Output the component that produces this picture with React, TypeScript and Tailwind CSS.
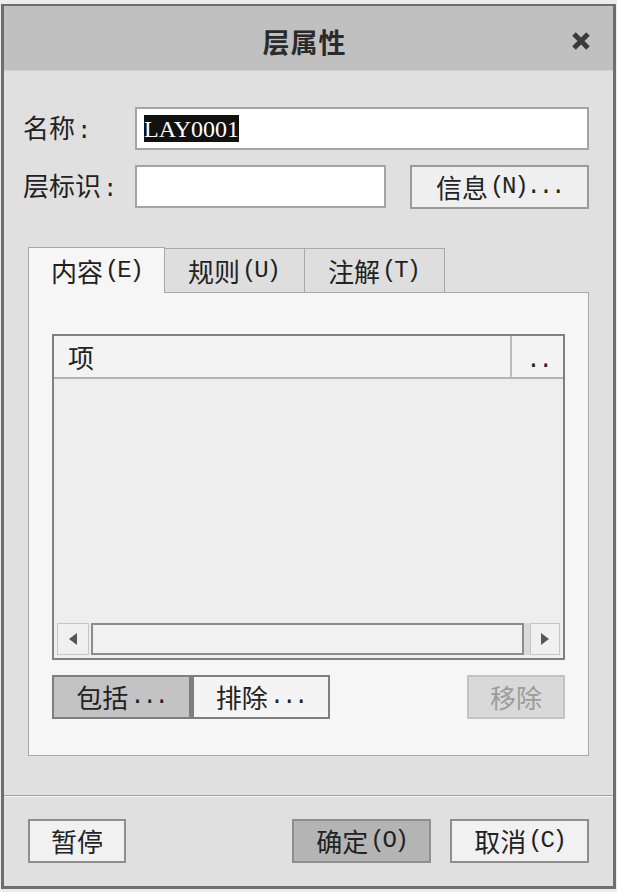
import type { ReactNode } from "react"

function Lt({ children }: { children: ReactNode }) {
  return <span className="ml-[2px] font-['Liberation_Mono',monospace] text-[24px] tracking-[-2.2px]">{children}</span>
}

function Btn({ children, className }: { children: ReactNode; className: string }) {
  return (
    <div className={`flex h-[44px] items-center justify-center border-2 leading-none ${className}`}>
      {children}
    </div>
  )
}

function Arrow({ dir }: { dir: "left" | "right" }) {
  return (
    <svg width="8" height="12" viewBox="0 0 8 12">
      {dir === "left" ? <path d="M8 0 L0 6 L8 12 Z" fill="#575757" /> : <path d="M0 0 L8 6 L0 12 Z" fill="#575757" />}
    </svg>
  )
}

export default function App() {
  return (
    <div className="h-[892px] w-[617px] bg-[#ececec] px-px pb-[3px] pt-[4px] font-['Noto_Sans_CJK_SC',sans-serif] text-[26px] text-[#222]">
      <div className="flex h-full flex-col border-x-[3px] border-b-[3px] border-t-2 border-[#6e6e6e] bg-[#e0e0e0]">
        {/* title bar */}
        <div className="relative flex h-[65px] items-center justify-center border-b border-[#d2d2d2] bg-[#c0c0c0] pr-[8px] pt-[6px]">
          <span className="text-[27px] font-bold leading-none tracking-[1px] text-[#2a2a2a]">层属性</span>
          <svg className="absolute right-[22px] top-[25px]" width="20" height="20" viewBox="0 0 20 20">
            <path d="M3 3 L17 17 M17 3 L3 17" stroke="#3a3a3a" strokeWidth="5" />
          </svg>
        </div>

        <div className="flex flex-1 flex-col px-[24px] pt-[36px]">
          {/* name */}
          <div className="flex h-[43px] items-center">
            <div className="-ml-[5px] w-[112px] leading-none">
              名称<Lt>:</Lt>
            </div>
            <div className="flex h-full flex-1 items-center border-2 border-[#a4a4a4] bg-white pl-[7px]">
              <span className="flex h-[27px] items-center bg-[#111] font-['Liberation_Serif',serif] text-[24px] leading-none text-white">
                LAY0001
              </span>
            </div>
          </div>

          {/* layer id */}
          <div className="mt-[15px] flex h-[43px] items-center">
            <div className="-ml-[5px] w-[112px] leading-none">
              层标识<Lt>:</Lt>
            </div>
            <div className="h-full w-[251px] border-2 border-[#a4a4a4] bg-white" />
            <Btn className="ml-[24px] flex-1 border-[#9a9a9a] bg-[#efefef]">
              信息<Lt>(N)...</Lt>
            </Btn>
          </div>

          {/* tabs */}
          <div className="mt-[39px] flex h-[45px] items-end">
            <div className="relative z-10 -mb-px flex h-[46px] w-[137px] items-center border border-b-0 border-[#a9a9a9] bg-[#f6f6f6] pl-[22px] leading-none">
              内容<Lt>(E)</Lt>
            </div>
            <div className="flex h-[44px] w-[140px] items-center border-r border-t border-[#a9a9a9] bg-[#dedede] pl-[23px] leading-none">
              规则<Lt>(U)</Lt>
            </div>
            <div className="flex h-[44px] w-[140px] items-center border-r border-t border-[#a9a9a9] bg-[#dedede] pl-[23px] leading-none">
              注解<Lt>(T)</Lt>
            </div>
          </div>

          {/* tab panel */}
          <div className="flex h-[464px] flex-col border border-[#a9a9a9] bg-[#f6f6f6] px-[23px] pt-[41px]">
            <div className="flex h-[326px] flex-col border-2 border-[#808080] bg-[#eeeeee]">
              <div className="flex h-[43px] border-b-2 border-[#b4b4b4] bg-[#f3f3f3]">
                <div className="flex flex-1 items-center border-r-2 border-[#bcbcbc] pl-[14px] leading-none">项</div>
                <div className="flex w-[51px] items-end justify-center pb-[4px] leading-none">
                  <Lt>..</Lt>
                </div>
              </div>
              <div className="flex-1" />
              <div className="mb-[3px] flex h-[32px] px-[3px]">
                <div className="flex w-[32px] items-center justify-center border border-[#c6c6c6] bg-[#f0f0f0]">
                  <Arrow dir="left" />
                </div>
                <div className="ml-[2px] flex-1 border-2 border-[#8c8c8c] bg-[#f1f1f1]" />
                <div className="w-[6px] bg-[#dadada]" />
                <div className="flex w-[30px] items-center justify-center border border-[#c6c6c6] bg-[#f0f0f0]">
                  <Arrow dir="right" />
                </div>
              </div>
            </div>

            <div className="mt-[15px] flex">
              <Btn className="h-[43px] w-[139px] border-[#7e7e7e] bg-[#c3c3c3]">
                包括<Lt>...</Lt>
              </Btn>
              <Btn className="h-[43px] w-[139px] border-l-[3px] border-[#7e7e7e] bg-[#f4f4f4]">
                排除<Lt>...</Lt>
              </Btn>
              <Btn className="ml-auto h-[43px] w-[98px] border-[#c4c4c4] bg-[#d9d9d9] text-[#9c9c9c]">移除</Btn>
            </div>
          </div>

          {/* separator */}
          <div className="-mx-[24px] mt-[39px] h-[2px] border-b border-t border-b-[#f2f2f2] border-t-[#a3a3a3]" />

          {/* bottom buttons */}
          <div className="mt-[22px] flex">
            <Btn className="w-[98px] border-[#8e8e8e] bg-[#f1f1f1]">暂停</Btn>
            <Btn className="ml-auto w-[139px] border-[#8e8e8e] bg-[#b4b4b4]">
              确定<Lt>(O)</Lt>
            </Btn>
            <Btn className="ml-[19px] w-[139px] border-[#8e8e8e] bg-[#f1f1f1]">
              取消<Lt>(C)</Lt>
            </Btn>
          </div>
        </div>
      </div>
    </div>
  )
}
